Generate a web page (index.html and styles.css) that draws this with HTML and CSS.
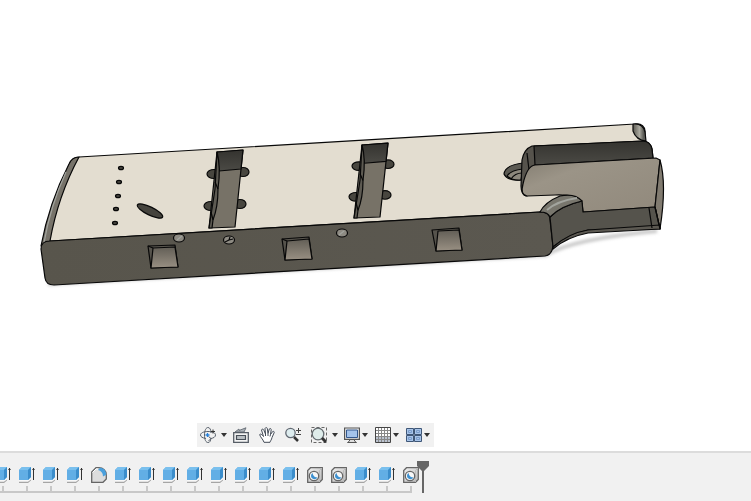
FILE: index.html
```
<!DOCTYPE html>
<html lang="en">
<head>
<meta charset="UTF-8">
<meta name="viewport" content="width=device-width, initial-scale=1.0">
<title>Model viewer</title>
<link rel="stylesheet" href="styles.css">
</head>
<body>

<!-- shared icons -->
<svg class="sprite" aria-hidden="true">
    <defs>
        <linearGradient id="hole-bg" x1="0" y1="0" x2="1" y2="1">
            <stop offset="0" stop-color="#f2f2f2"/>
            <stop offset="1" stop-color="#b8b8b8"/>
        </linearGradient>
    </defs>
    <symbol id="extrude" viewBox="0 0 16 16">
        <path d="M0 14.500h9l3-3v2L9 16H0z" fill="#a5a5a5"/>
        <path d="M0 13h9l3-2v1.500L9 14.500H0z" fill="#f8f8f8"/>
        <path d="M0 3l3-3h9v10l-3 3H0z" fill="#62aee5"/>
        <path d="M0 3l3-3h9L9 3z" fill="#7ac0ee"/>
        <path d="M9 3l3-3v10l-3 3z" fill="#3b8dcb"/>
        <path d="M14 1h1v12h-1z" fill="#333"/>
        <path d="M13 3l1.500-2L16 3z" fill="#333"/>
    </symbol>
    <symbol id="fillet" viewBox="0 0 16 16">
        <path d="M.7 15.300V5L5 .7h3c4 0 7.300 3 7.300 7V12L12 15.300z" fill="#ddd" stroke="#666" stroke-width="1.300"/>
        <path d="M7 3l2-2.300c4 .3 6.300 3.300 6.300 7L12 9.500C12 6 10 3.700 7 3z" fill="#4aa0dd"/>
        <path d="M1.500 5.500L5 2h2" fill="none" stroke="#fff"/>
    </symbol>
    <symbol id="hole" viewBox="0 0 16 16">
        <path d="M.7 15.300V3.500L3.500.7h11.800v11.800l-2.800 2.800z" fill="url(#hole-bg)" stroke="#666" stroke-width="1.300"/>
        <path d="M12.500 15V3.500L15 1" fill="none" stroke="#bbb"/>
        <circle cx="7" cy="9" r="4.700" fill="#f7f7f7" stroke="#666" stroke-width="1.300"/>
        <path d="M5.500 6C6 9 8 10.500 10.500 10.500C9 13 5 12.500 4.200 10C3.700 8.500 4.300 7 5.500 6z" fill="#3c90d0"/>
    </symbol>
    <symbol id="caret" viewBox="0 0 6 4">
        <path d="M0 0h6L3 4z" fill="#333"/>
    </symbol>
</svg>

<main class="viewport">
    <svg class="model" viewBox="0 0 751 423" role="img" aria-label="3D model">
        <defs>
            <linearGradient id="front" x1="0" y1="0" x2="1" y2="0">
                <stop offset="0" stop-color="#58554c"/>
                <stop offset="1" stop-color="#5b5850"/>
            </linearGradient>
            <linearGradient id="wall" x1="0" y1="0" x2="0" y2="1">
                <stop offset="0" stop-color="#34332f"/>
                <stop offset="1" stop-color="#4b4a45"/>
            </linearGradient>
            <linearGradient id="floor" x1="0" y1="0" x2="1" y2="1">
                <stop offset="0" stop-color="#827c70"/>
                <stop offset=".3" stop-color="#9b9487"/>
                <stop offset="1" stop-color="#91897c"/>
            </linearGradient>
            <linearGradient id="window" x1="0" y1="0" x2="0" y2="1">
                <stop offset="0" stop-color="#625e56"/>
                <stop offset="1" stop-color="#999083"/>
            </linearGradient>
            <linearGradient id="round" x1="0" y1="0" x2="1" y2="0">
                <stop offset=".1" stop-color="#6b6961"/>
                <stop offset=".5" stop-color="#aaa99f"/>
                <stop offset=".8" stop-color="#5c5c57"/>
            </linearGradient>
            <filter id="soft" x="-20%" y="-50%" width="140%" height="200%">
                <feGaussianBlur stdDeviation="1.500"/>
            </filter>
            <g id="slot">
                <g fill="#48463f">
                    <ellipse cx="-3" cy="22" rx="7" ry="4.500"/>
                    <ellipse cx="26" cy="20" rx="6" ry="4.500"/>
                    <ellipse cx="-6" cy="54" rx="7" ry="4.500"/>
                    <ellipse cx="23" cy="52" rx="6" ry="4.500"/>
                </g>
                <path d="M0 0L26-2L18 75L-8 76z" fill="#777267"/>
                <path d="M0 0L26-2L24 17L2 19z" fill="url(#wall)"/>
                <path d="M0 0Q4 15 1 37Q1 55-4 68L-5 76L-8 76L-2 37z" fill="#5d5a52"/>
                <path d="M1 37L-2 30M-4 68L-6 60" fill="none"/>
            </g>
        </defs>

        <path d="M48 284L546 255Q572 239 657 231" class="shadow" filter="url(#soft)"/>

        <g class="edges">
            <!-- body -->
            <path d="M79 157L635 124Q644 123 645 131L645 142L583 212L540 212L50 241L42 246Q52 200 70 163Q73 157 79 157z" fill="#e3ddd0"/>
            <path d="M79 157Q72 157 69 164Q49 203 41 246L50 241Q58 196 79 157z" fill="#77736a"/>
            <path d="M66 172Q50 207 44 243" fill="none" class="shine"/>
            <path d="M50 241L540 212Q550 212 550 220L553 246Q552 255 545 256L54 285Q46 285 45 278L41 249Q41 241 50 241z" fill="url(#front)"/>

            <!-- drilled holes -->
            <g fill="#45433d">
                <ellipse cx="121" cy="168" rx="2.500" ry="1.700"/>
                <ellipse cx="119" cy="182" rx="2.500" ry="1.700"/>
                <ellipse cx="118" cy="196" rx="2.500" ry="1.700"/>
                <ellipse cx="116" cy="209" rx="2.500" ry="1.700"/>
                <ellipse cx="115" cy="223" rx="2.500" ry="1.700"/>
                <ellipse cx="150" cy="211" rx="14" ry="4" transform="rotate(26 150 211)"/>
            </g>
            <g fill="#8e8b83">
                <ellipse cx="179" cy="238" rx="5.500" ry="4"/>
                <ellipse cx="229" cy="240" rx="5.500" ry="4"/>
                <ellipse cx="342" cy="233" rx="5.500" ry="4"/>
            </g>
            <path d="M225 242L229 240L230 237M229 240L233 239" fill="none"/>
            <path d="M177 240L182 236M339 235L344 231" fill="none" class="shine"/>

            <use href="#slot" transform="translate(217 152)"/>
            <use href="#slot" transform="translate(362 145) scale(1 .96)"/>

            <!-- front windows -->
            <path d="M148 246L175 245L178 267L151 268z" fill="#56534c"/>
            <path d="M153 248L175 247L178 267L151 268z" fill="url(#window)"/>
            <path d="M148 246L153 248" fill="none"/>
            <path d="M282 239L309 237L312 259L285 260z" fill="#56534c"/>
            <path d="M287 241L309 239L312 259L285 260z" fill="url(#window)"/>
            <path d="M282 239L287 241" fill="none"/>
            <path d="M432 230L459 228L462 250L436 251z" fill="#56534c"/>
            <path d="M438 231L459 230L462 250L436 251z" fill="url(#window)"/>

            <!-- neck pocket -->
            <path d="M523 163Q505 165 504 174Q507 181 521 180z" fill="#5c5a53"/>
            <path d="M523 169Q511 170 507 176Q513 181 521 180z" fill="#8d887d"/>
            <path d="M511 179Q515 173 522 173" fill="none"/>
            <path d="M633 124Q643 123 645 132L646 141Q636 140 633 131z" fill="url(#round)"/>
            <path d="M532 146Q524 149 522 160L521 186Q521 195 527 196L535 165L653 158L652 149Q650 141 643 141z" fill="#56534c"/>
            <path d="M534 146L643 141Q651 142 652 149L653 158L535 165z" fill="url(#wall)"/>
            <path d="M527 153L529 170" fill="none"/>
            <path d="M535 165L656 158L660 160L655 207L583 212L582 203Q575 194 555 195L527 196Q520 195 523 184Q527 166 535 165z" fill="url(#floor)"/>
            <path d="M660 160Q667 184 660 229L655 207z" fill="#817b70"/>
            <path d="M550 217Q561 206 582 201L583 212L655 207L660 229L588 230Q567 235 553 247z" fill="#55534c"/>
            <path d="M553 247Q569 233 588 230L660 225L660 229L588 233Q567 237 553 249z" fill="#5c5952"/>
            <path d="M649 208L652 228M655 207L660 229" fill="none"/>
            <path d="M540 212Q545 202 560 196Q575 193 582 201Q560 206 550 217Q548 212 540 212z" fill="#78766d"/>
            <path d="M547 210Q557 201 577 198" fill="none" class="shine wide"/>
        </g>
    </svg>

    <nav class="toolbar" aria-label="Navigation">
        <button class="tool menu" aria-label="Orbit">
            <svg class="icon" viewBox="0 0 16 16">
                <g fill="none" stroke="#59616c">
                    <path d="M6 11.500C2.500 11 .5 9.800.5 8S3 4.500 8 4.500S15.500 6 15.500 8S13.500 11 11 11.500"/>
                    <path d="M11 6C11 2.500 9.800.5 8 .5S4.500 3 4.500 8S6 15.500 8 15.500S10.500 14 11 11"/>
                    <path d="M8.500 9.500l2.500 2-2.500 2.500"/>
                    <path d="M11 4.500h4M13 2.500v4" stroke="#333"/>
                </g>
                <path d="M5.500 8h4M7.500 6v4" stroke="#2580dc" stroke-width="1.300"/>
            </svg>
            <svg class="caret"><use href="#caret"/></svg>
        </button>
        <button class="tool" aria-label="Look at">
            <svg class="icon" viewBox="0 0 16 16">
                <path d="M2 5l4-3v1.500L13 .8l-2 4.200z" fill="#aeb4ba" stroke="#6d747c"/>
                <path d="M.7 5.700h14.600v9.600H.7z" fill="#f4f4f4" stroke="#565d66" stroke-width="1.300"/>
                <path d="M3.500 8.500h9v4h-9z" fill="#b8bec2" stroke="#484f58" stroke-width="1.200"/>
            </svg>
        </button>
        <button class="tool" aria-label="Pan">
            <svg class="icon" viewBox="0 0 16 16">
                <path d="M5 15.300C4 12 1 10 .7 7.500C1.500 6.500 3 7.500 4.500 9.500L2.500 3C3 1.500 4.500 2 5 3.500L6.500 7L6 1.500C6.500.3 8 .3 8.300 1.500L9 6.500L10.300 2C11 1 12.300 1.500 12.200 2.700L11.500 7.500L13.700 4.500C15 4 15.600 5 15 6L13 10.500C12.500 13 11.500 13.500 11 15.300z" fill="#fff" stroke="#444c58"/>
                <path d="M6.500 7v2M9 6.500V9M11.500 7.500L11 9.500" stroke="#444c58" fill="none"/>
            </svg>
        </button>
        <button class="tool" aria-label="Zoom">
            <svg class="icon" viewBox="0 0 16 16">
                <circle cx="5.500" cy="6" r="4.700" fill="#deedef" stroke="#626973" stroke-width="1.300"/>
                <path d="M9 10l4 4" stroke="#333" stroke-width="2.500"/>
                <path d="M11 3.500h5M13.500 1v5M11 7.500h5" stroke="#444"/>
            </svg>
        </button>
        <button class="tool menu" aria-label="Fit">
            <svg class="icon" viewBox="0 0 16 16">
                <path d="M.5.500h15v15H.5z" fill="none" stroke="#666" stroke-dasharray="3 2"/>
                <circle cx="7" cy="7" r="5.800" fill="#dfedeb" stroke="#646b70" stroke-width="1.300"/>
                <path d="M11 11l4 4" stroke="#333" stroke-width="3"/>
            </svg>
            <svg class="caret"><use href="#caret"/></svg>
        </button>
        <button class="tool menu tight" aria-label="Display settings">
            <svg class="icon" viewBox="0 0 16 16">
                <path d="M.6 1h14.800v11.400H.6z" fill="#eee" stroke="#555" stroke-width="1.200"/>
                <path d="M2.500 3h11v7.500h-11z" fill="#a4c3eb" stroke="#34588d"/>
                <path d="M5.500 12.500h5v1.500l2 1.500h-9l2-1.500z" fill="#ddd" stroke="#555"/>
            </svg>
            <svg class="caret"><use href="#caret"/></svg>
        </button>
        <button class="tool menu tight" aria-label="Grid and snaps">
            <svg class="icon" viewBox="0 0 16 16">
                <path d="M.5.500h15v15H.5z" fill="#fff" stroke="#444"/>
                <path d="M1 9h14v6H1z" fill="#bac2cf"/>
                <path d="M3.500 1v14M6.500 1v14M9.500 1v14M12.500 1v14M1 3.500h14M1 6.500h14M1 9.500h14M1 12.500h14" stroke="#888"/>
            </svg>
            <svg class="caret"><use href="#caret"/></svg>
        </button>
        <button class="tool menu tight" aria-label="Viewports">
            <svg class="icon" viewBox="0 0 16 16">
                <path d="M.5 1.500h7v6h-7zM8.500 1.500h7v6h-7zM.5 8.500h7v6h-7zM8.500 8.500h7v6h-7z" fill="#a8c4e8" stroke="#3f5778"/>
                <path d="M2.500 3.500h3v2h-3zM10.500 3.500h3v2h-3zM2.500 10.500h3v2h-3zM10.500 10.500h3v2h-3z" fill="none" stroke="#7a9dcc"/>
            </svg>
            <svg class="caret"><use href="#caret"/></svg>
        </button>
    </nav>
</main>

<footer class="timeline">
    <ol class="steps">
        <li><svg class="icon"><use href="#extrude"/></svg></li>
        <li><svg class="icon"><use href="#extrude"/></svg></li>
        <li><svg class="icon"><use href="#extrude"/></svg></li>
        <li><svg class="icon"><use href="#extrude"/></svg></li>
        <li><svg class="icon"><use href="#fillet"/></svg></li>
        <li><svg class="icon"><use href="#extrude"/></svg></li>
        <li><svg class="icon"><use href="#extrude"/></svg></li>
        <li><svg class="icon"><use href="#extrude"/></svg></li>
        <li><svg class="icon"><use href="#extrude"/></svg></li>
        <li><svg class="icon"><use href="#extrude"/></svg></li>
        <li><svg class="icon"><use href="#extrude"/></svg></li>
        <li><svg class="icon"><use href="#extrude"/></svg></li>
        <li><svg class="icon"><use href="#extrude"/></svg></li>
        <li><svg class="icon"><use href="#hole"/></svg></li>
        <li><svg class="icon"><use href="#hole"/></svg></li>
        <li><svg class="icon"><use href="#extrude"/></svg></li>
        <li><svg class="icon"><use href="#extrude"/></svg></li>
        <li><svg class="icon"><use href="#hole"/></svg></li>
    </ol>
    <svg class="marker" viewBox="0 0 12 32" aria-hidden="true">
        <path d="M0 0h12v5L7 10v22H5V10L0 5z" fill="#666"/>
    </svg>
</footer>

</body>
</html>
```

FILE: styles.css
```
* {
    box-sizing: border-box;
}
body {
    margin: 0;
    min-height: 100vh;
    display: flex;
    flex-direction: column;
    background: #fff;
    font-family: "Liberation Sans", Arial, sans-serif;
    overflow-x: hidden;
}
svg {
    display: block;
    flex: none;
}
.sprite {
    position: absolute;
    width: 0;
    height: 0;
}
.icon {
    width: 16px;
    height: 16px;
}
.caret {
    width: 6px;
    height: 4px;
}

/* model */
.viewport {
    flex: 1;
    display: flex;
    flex-direction: column;
    padding-bottom: 4px;
}
.model {
    flex: 1;
    width: 100%;
    min-height: 0;
}
.edges {
    stroke: #080808;
    stroke-width: 1.2;
    stroke-linejoin: round;
}
.shine {
    stroke: #a2a49e;
}
.wide {
    stroke-width: 2;
}
.shadow {
    fill: none;
    stroke: #ccc;
    stroke-width: 4;
}

/* navigation bar */
.toolbar {
    display: flex;
    align-self: flex-start;
    align-items: center;
    height: 24px;
    margin-left: 197px;
    background: #f1f1f1;
}
.tool {
    display: flex;
    align-items: center;
    gap: 5px;
    height: 24px;
    padding: 0 7px 0 3px;
    border: 0;
    background: none;
}
.tool.menu {
    padding-right: 3px;
}
.tool.tight {
    gap: 2px;
    padding-right: 4px;
}
.tool:hover {
    background: #dcebf7;
}

/* timeline */
.timeline {
    display: flex;
    height: 50px;
    padding-top: 8px;
    border-top: 2px solid #dcdcdc;
    background: #f1f1f1;
}
.steps {
    display: flex;
    height: 32px;
    margin: 0 0 0 -9px;
    padding: 0;
    list-style: none;
}
.steps li {
    display: flex;
    flex-direction: column;
    align-items: center;
    width: 24px;
    padding-top: 6px;
    border-bottom: 2px solid #c8c8c8;
}
.steps li::after {
    content: "";
    width: 2px;
    height: 5px;
    margin-top: 3px;
    background: #c8c8c8;
}
.steps li:last-child {
    width: 13px;
    align-items: flex-end;
}
.steps li:last-child .icon {
    margin-right: -7px;
}
.marker {
    width: 12px;
    height: 32px;
    margin-left: 5px;
}
```
